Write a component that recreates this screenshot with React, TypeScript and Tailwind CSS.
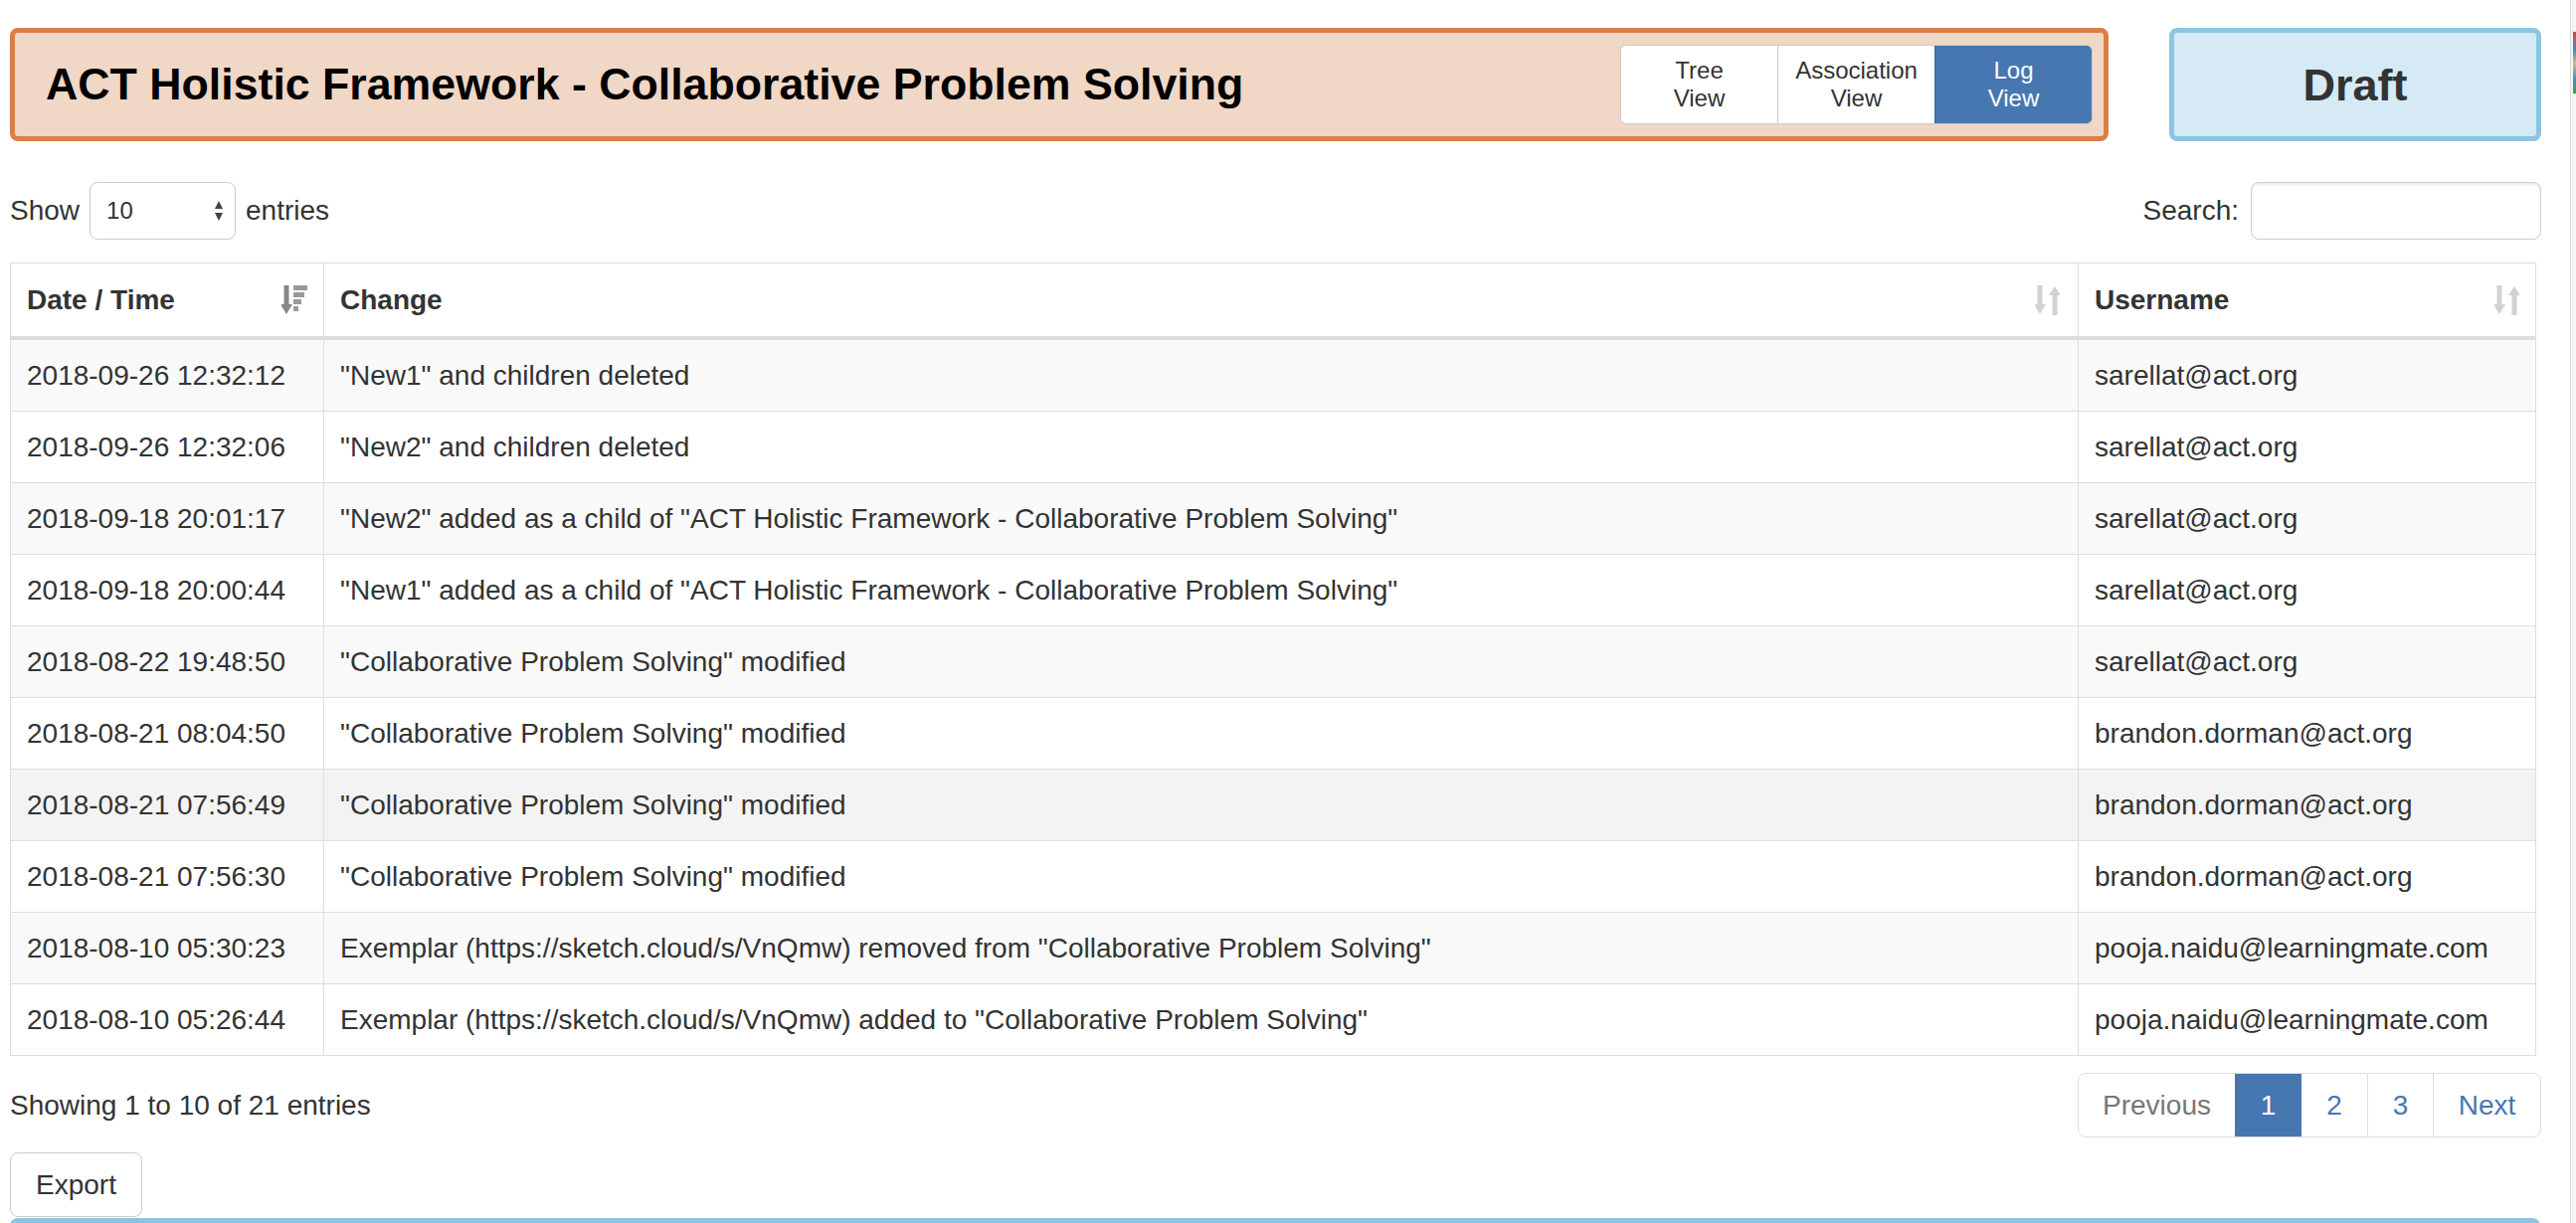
import React from "react";

const rows = [
  ["2018-09-26 12:32:12", "\"New1\" and children deleted", "sarellat@act.org"],
  ["2018-09-26 12:32:06", "\"New2\" and children deleted", "sarellat@act.org"],
  ["2018-09-18 20:01:17", "\"New2\" added as a child of \"ACT Holistic Framework - Collaborative Problem Solving\"", "sarellat@act.org"],
  ["2018-09-18 20:00:44", "\"New1\" added as a child of \"ACT Holistic Framework - Collaborative Problem Solving\"", "sarellat@act.org"],
  ["2018-08-22 19:48:50", "\"Collaborative Problem Solving\" modified", "sarellat@act.org"],
  ["2018-08-21 08:04:50", "\"Collaborative Problem Solving\" modified", "brandon.dorman@act.org"],
  ["2018-08-21 07:56:49", "\"Collaborative Problem Solving\" modified", "brandon.dorman@act.org"],
  ["2018-08-21 07:56:30", "\"Collaborative Problem Solving\" modified", "brandon.dorman@act.org"],
  ["2018-08-10 05:30:23", "Exemplar (https://sketch.cloud/s/VnQmw) removed from \"Collaborative Problem Solving\"", "pooja.naidu@learningmate.com"],
  ["2018-08-10 05:26:44", "Exemplar (https://sketch.cloud/s/VnQmw) added to \"Collaborative Problem Solving\"", "pooja.naidu@learningmate.com"],
];

function SortDesc() {
  return (
    <svg width="26" height="30" viewBox="0 0 26 30">
      <rect x="2.5" y="0" width="5" height="21" fill="#888" />
      <polygon points="-1,19 11,19 5,29" fill="#888" />
      <rect x="12" y="0" width="14" height="5" fill="#999" />
      <rect x="12" y="7" width="11" height="5" fill="#999" />
      <rect x="12" y="14" width="8" height="5" fill="#999" />
      <rect x="12" y="21" width="5" height="5" fill="#999" />
    </svg>
  );
}

function SortBoth() {
  return (
    <svg width="25" height="30" viewBox="0 0 25 30">
      <rect x="2.5" y="0" width="5" height="21" fill="#d2d2d2" />
      <polygon points="-1,19 11,19 5,29" fill="#d2d2d2" />
      <polygon points="14,10 26,10 20,1" fill="#d2d2d2" />
      <rect x="17.5" y="8" width="5" height="22" fill="#d2d2d2" />
    </svg>
  );
}

export default function App() {
  return (
    <div className="flex h-[1230px] w-[2590px] overflow-hidden bg-white font-['Liberation_Sans',Arial,sans-serif] text-[#333]">
      <div className="flex w-[2584px] flex-col pl-[10px] pr-[29px] pt-[28px]">
        {/* Title bar */}
        <div className="flex gap-[61px]">
          <div className="flex h-[114px] flex-1 items-center justify-between rounded-lg border-[5px] border-[#d97f4a] bg-[#f1d7c5] pl-[31px] pr-[11px]">
            <h1 className="text-[44.7px] font-bold leading-none text-black">
              ACT Holistic Framework - Collaborative Problem Solving
            </h1>
            <div className="flex h-[80px] overflow-hidden rounded-md border border-[#ccc] text-[24px] leading-[28px]">
              <button className="w-[158px] border-r border-[#ccc] bg-white text-[#333]">Tree<br />View</button>
              <button className="w-[157px] bg-white text-[#333]">Association<br />View</button>
              <button className="w-[158px] border-l border-[#2e6da4] bg-[#4677b1] text-white">Log<br />View</button>
            </div>
          </div>
          <div className="flex h-[114px] w-[374px] items-center justify-center rounded-lg border-[5px] border-[#8cc5e3] bg-[#d5eaf5]">
            <span className="text-[45px] font-bold leading-none text-[#333]">Draft</span>
          </div>
        </div>

        {/* Controls */}
        <div className="mt-[41px] flex items-center justify-between text-[28px]">
          <div className="flex items-center">
            <span>Show</span>
            <div className="mx-[10px] flex h-[58px] w-[147px] items-center justify-between rounded-lg border border-[#ccc] pl-[16px] pr-[12px] text-[24px]">
              <span>10</span>
              <svg width="8" height="22" viewBox="0 0 8 22">
                <polygon points="0,9 8,9 4,1" fill="#444" />
                <polygon points="0,13 8,13 4,21" fill="#444" />
              </svg>
            </div>
            <span>entries</span>
          </div>
          <div className="flex items-center">
            <span>Search:</span>
            <div className="ml-[12px] h-[58px] w-[292px] rounded-lg border border-[#ccc] shadow-[inset_0_2px_2px_rgba(0,0,0,0.075)]" />
          </div>
        </div>

        {/* Table */}
        <table className="mr-[5px] mt-[23px] border-collapse border border-[#ddd] text-[28px]">
          <thead>
            <tr className="border-b-4 border-[#ddd]">
              <th className="w-[315px] border border-b-4 border-[#ddd] px-4 py-4 text-left font-bold leading-[41px]">
                <div className="flex items-center justify-between">
                  <span>Date / Time</span>
                  <SortDesc />
                </div>
              </th>
              <th className="border border-b-4 border-[#ddd] px-4 py-4 text-left font-bold leading-[41px]">
                <div className="flex items-center justify-between pr-[2px]">
                  <span>Change</span>
                  <SortBoth />
                </div>
              </th>
              <th className="w-[460px] border border-b-4 border-[#ddd] px-4 py-4 text-left font-bold leading-[41px]">
                <div className="flex items-center justify-between">
                  <span>Username</span>
                  <SortBoth />
                </div>
              </th>
            </tr>
          </thead>
          <tbody>
            {rows.map((r, i) => (
              <tr
                key={i}
                className={i === 6 ? "bg-[#f3f3f3]" : i % 2 === 0 ? "bg-[#f9f9f9]" : "bg-white"}
              >
                {r.map((c, j) => (
                  <td key={j} className="whitespace-nowrap border border-[#ddd] px-4 py-4 leading-[39px]">
                    {c}
                  </td>
                ))}
              </tr>
            ))}
          </tbody>
        </table>

        {/* Footer */}
        <div className="mt-[17px] flex items-center justify-between text-[28px]">
          <span>Showing 1 to 10 of 21 entries</span>
          <div className="flex h-[65px] overflow-hidden rounded-lg border border-[#ddd] leading-none">
            <span className="flex w-[157px] items-center justify-center text-[#777]">Previous</span>
            <span className="flex w-[67px] items-center justify-center bg-[#4677b1] text-white">1</span>
            <span className="flex w-[66px] items-center justify-center text-[#4677b1]">2</span>
            <span className="flex w-[66px] items-center justify-center border-l border-[#ddd] text-[#4677b1]">3</span>
            <span className="flex w-[108px] items-center justify-center border-l border-[#ddd] text-[#4677b1]">Next</span>
          </div>
        </div>

        <div className="mt-[15px]">
          <button className="h-[65px] w-[133px] rounded-lg border border-[#ccc] bg-white text-[28px] text-[#333]">
            Export
          </button>
        </div>

        <div className="mr-[1px] mt-[1px] h-[80px] shrink-0 rounded-lg border-[5px] border-[#8cc5e3] bg-[#d5eaf5]" />
      </div>

      {/* window edge */}
      <div className="flex w-[6px] flex-col border-l border-[#d9d9d9] bg-[#f4f4f4] pt-[32px]">
        <div className="ml-[2px] h-[62px] w-[4px] bg-[linear-gradient(180deg,#d44_0%,#48c_30%,#cbb98e_50%,#48c_80%,#3a3_100%)]" />
      </div>
    </div>
  );
}
